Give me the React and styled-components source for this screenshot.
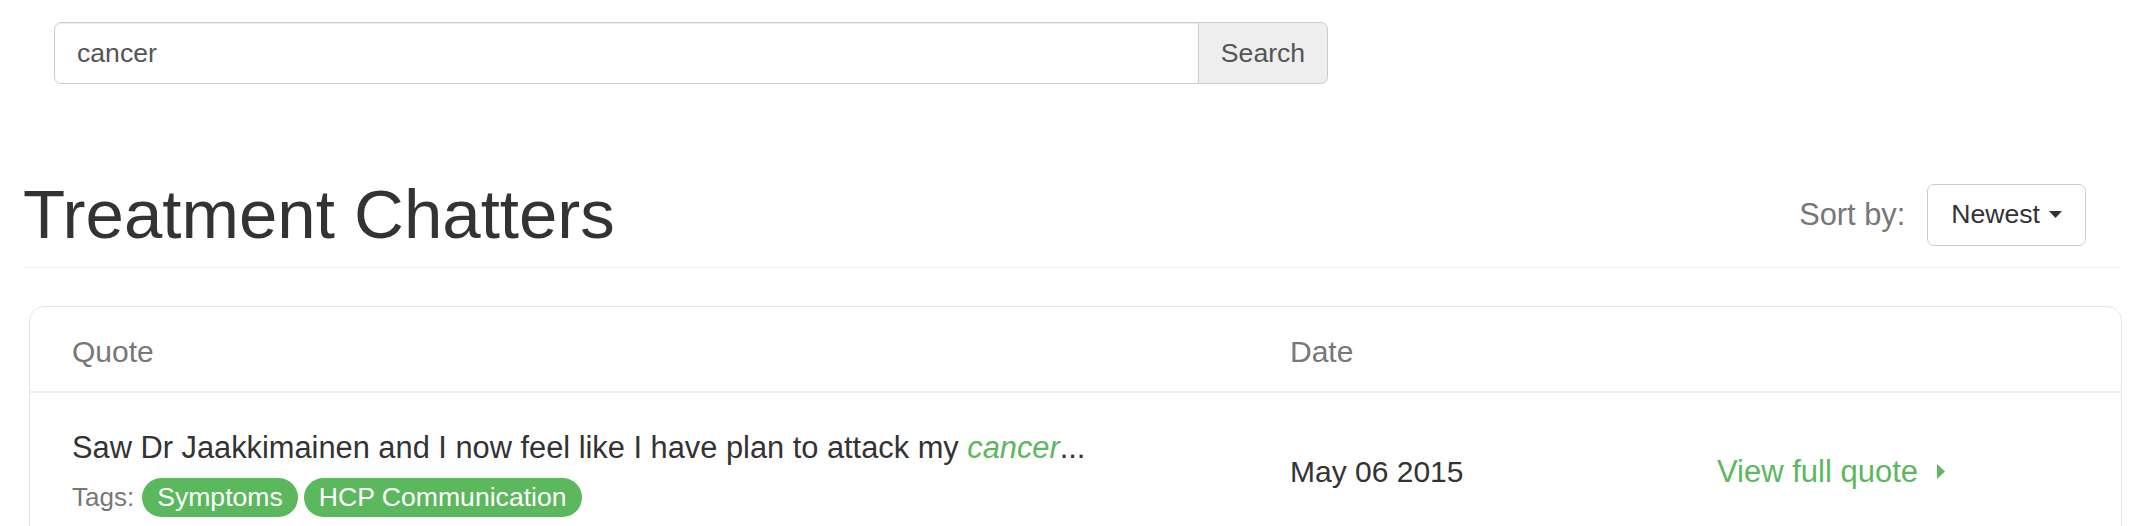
import React from "react";
import styled, { createGlobalStyle } from "styled-components";

const GlobalStyle = createGlobalStyle`
  html, body {
    margin: 0;
    padding: 0;
    background: #fff;
  }
  body {
    font-family: "Liberation Sans", Helvetica, Arial, sans-serif;
    color: #333;
    -webkit-font-smoothing: antialiased;
  }
  *, *::before, *::after {
    box-sizing: border-box;
  }
`;

const Page = styled.div`
  padding: 22px 35px 0 23px;
`;

const SearchForm = styled.form`
  display: flex;
  width: 1274px;
  height: 62px;
  margin: 0 0 0 31px;
`;

const SearchInput = styled.input`
  flex: 1;
  height: 100%;
  padding: 0 22px;
  font-family: inherit;
  font-size: 26.6px;
  color: #555;
  background: #fff;
  border: 1px solid #ccc;
  border-radius: 7px 0 0 7px;
  box-shadow: inset 0 1px 1px rgba(0, 0, 0, 0.075);
  outline: none;
`;

const SearchButton = styled.button`
  width: 130px;
  height: 100%;
  margin-left: -1px;
  padding: 0;
  font-family: inherit;
  font-size: 26.6px;
  color: #555;
  background: #eee;
  border: 1px solid #ccc;
  border-radius: 0 7px 7px 0;
  cursor: pointer;
`;

const PageHeader = styled.header`
  display: flex;
  align-items: center;
  justify-content: space-between;
  margin-top: 93px;
  padding-bottom: 15px;
  border-bottom: 1px solid #eee;
`;

const Title = styled.h1`
  margin: 0;
  font-size: 69px;
  line-height: 75px;
  font-weight: 400;
  color: #333;
`;

const SortGroup = styled.div`
  display: flex;
  align-items: center;
  gap: 22px;
  margin-right: 33px;
`;

const SortLabel = styled.span`
  font-size: 30.8px;
  color: #777;
`;

const SortButton = styled.button`
  display: flex;
  align-items: center;
  gap: 9px;
  height: 62px;
  padding: 0 23px;
  font-family: inherit;
  font-size: 26.6px;
  color: #333;
  background: #fff;
  border: 1px solid #ccc;
  border-radius: 7px;
  cursor: pointer;
`;

const Card = styled.section`
  margin: 38px -3px 0 6px;
  border: 1px solid #e6e6e6;
  border-radius: 15px;
  overflow: hidden;
`;

const Row = styled.div`
  display: grid;
  grid-template-columns: 1218px 427px 1fr;
  align-items: center;
`;

const HeadRow = styled(Row)`
  height: 86px;
  padding-top: 5px;
  border-bottom: 2px solid #eee;
`;

const HeadCell = styled.div`
  padding: 0 42px;
  font-size: 30px;
  line-height: 43px;
  color: #777;
`;

const BodyCell = styled.div`
  padding: 33px 42px;
  font-size: 30px;
  line-height: 43px;
  color: #333;
`;

const QuoteText = styled.p`
  margin: 0;
  font-size: 30.8px;
`;

const Highlight = styled.em`
  color: #5cb85c;
  font-style: italic;
`;

const TagLine = styled.div`
  display: flex;
  align-items: center;
  gap: 6px;
  margin-top: 9px;
`;

const TagsLabel = styled.span`
  margin-right: 2px;
  font-size: 26px;
  line-height: 39px;
  color: #777;
`;

const Tag = styled.span`
  display: inline-block;
  padding: 0 15px;
  font-size: 26.6px;
  line-height: 39px;
  color: #fff;
  background: #5cb85c;
  border-radius: 20px;
`;

const ViewLink = styled.a`
  display: inline-flex;
  align-items: center;
  gap: 19px;
  font-size: 31px;
  color: #5cb85c;
  text-decoration: none;
`;

const CaretDown = () => (
  <svg width="13" height="7" viewBox="0 0 13 7" aria-hidden="true">
    <path d="M0 0 H13 L6.5 7 Z" fill="#333" />
  </svg>
);

const CaretRight = () => (
  <svg width="8" height="15" viewBox="0 0 8 15" aria-hidden="true">
    <path d="M0 0 L8 7.5 L0 15 Z" fill="#5cb85c" />
  </svg>
);

const chatters = [
  {
    before: "Saw Dr Jaakkimainen and I now feel like I have plan to attack my ",
    match: "cancer",
    after: "...",
    tags: ["Symptoms", "HCP Communication"],
    date: "May 06 2015",
  },
];

export default function App() {
  return (
    <>
      <GlobalStyle />
      <Page>
        <SearchForm onSubmit={(e) => e.preventDefault()}>
          <SearchInput type="text" defaultValue="cancer" />
          <SearchButton type="submit">Search</SearchButton>
        </SearchForm>

        <PageHeader>
          <Title>Treatment Chatters</Title>
          <SortGroup>
            <SortLabel>Sort by:</SortLabel>
            <SortButton type="button">
              Newest
              <CaretDown />
            </SortButton>
          </SortGroup>
        </PageHeader>

        <Card>
          <HeadRow>
            <HeadCell>Quote</HeadCell>
            <HeadCell>Date</HeadCell>
            <HeadCell />
          </HeadRow>
          {chatters.map((c, i) => (
            <Row key={i}>
              <BodyCell>
                <QuoteText>
                  {c.before}
                  <Highlight>{c.match}</Highlight>
                  {c.after}
                </QuoteText>
                <TagLine>
                  <TagsLabel>Tags:</TagsLabel>
                  {c.tags.map((t) => (
                    <Tag key={t}>{t}</Tag>
                  ))}
                </TagLine>
              </BodyCell>
              <BodyCell>{c.date}</BodyCell>
              <BodyCell>
                <ViewLink href="#">
                  View full quote
                  <CaretRight />
                </ViewLink>
              </BodyCell>
            </Row>
          ))}
        </Card>
      </Page>
    </>
  );
}
